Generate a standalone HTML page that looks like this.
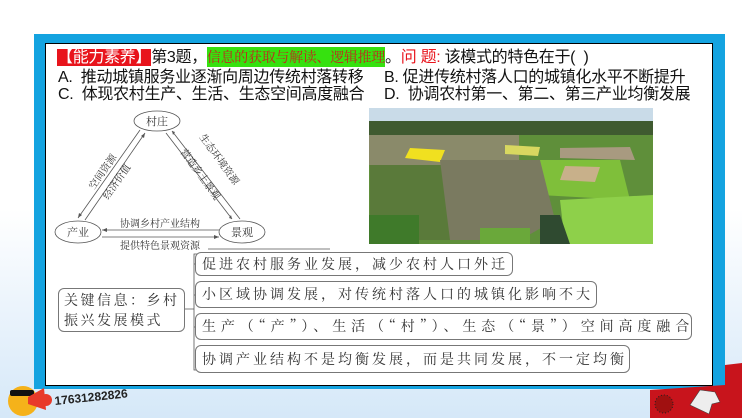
<!DOCTYPE html>
<html><head><meta charset="utf-8"><style>
*{margin:0;padding:0;box-sizing:border-box}
body{width:742px;height:418px;overflow:hidden;position:relative;background:linear-gradient(180deg,#fff 0%,#fff 50%,#e6f1fb 80%,#d5e8f8 100%);font-family:"Liberation Sans","Noto Sans CJK SC",sans-serif}
.ab{position:absolute}
.frame{left:34px;top:34px;width:691px;height:355px;background:#14a3e0}
.inner{left:45px;top:43px;width:668px;height:343px;background:#fff;border:1.5px solid #000}
.t{position:absolute;white-space:nowrap;font-size:16px;color:#111;font-family:"Liberation Sans","Noto Sans CJK SC",sans-serif;letter-spacing:-0.3px}
.box{position:absolute;border:1px solid #777;border-radius:6px;background:#fff;font-family:"Noto Serif CJK SC","Liberation Serif",serif;font-size:14px;color:#333;letter-spacing:3px;padding-left:6px;white-space:nowrap}
</style></head><body>
<div class="ab frame"></div>
<div class="ab inner"></div>
<div class="t" style="left:57px;top:47px;line-height:20px"><span style="background:#e8141c;color:#fff">【能力素养】</span>第3题，<span style="background:#36e10f;color:#c0281e;font-family:'Noto Serif CJK SC',serif;font-size:14px">信息的获取与解读、逻辑推理</span>。<span style="color:#e8141c">问 题:</span> 该模式的特色在于(&nbsp;&nbsp;)</div>
<div class="t" style="left:58px;top:69px;line-height:17px">A.&nbsp; 推动城镇服务业逐渐向周边传统村落转移</div>
<div class="t" style="left:384px;top:69px;line-height:17px">B. 促进传统村落人口的城镇化水平不断提升</div>
<div class="t" style="left:58px;top:86px;line-height:17px">C.&nbsp; 体现农村生产、生活、生态空间高度融合</div>
<div class="t" style="left:384px;top:86px;line-height:17px">D.&nbsp; 协调农村第一、第二、第三产业均衡发展</div>

<svg class="ab" style="left:0;top:0" width="742" height="418">
<g fill="none" stroke="#555" stroke-width="0.8">
<ellipse cx="157" cy="121" rx="23" ry="10"/>
<ellipse cx="78" cy="232" rx="23" ry="11"/>
<ellipse cx="242" cy="232" rx="23" ry="11"/>
<line x1="140" y1="130" x2="78" y2="218"/><line x1="85" y1="220" x2="145" y2="133"/>
<line x1="166" y1="133" x2="232" y2="219"/><line x1="240" y1="219" x2="172" y2="131"/>
<line x1="102" y1="230" x2="219" y2="230"/><line x1="102" y1="237" x2="219" y2="237"/>
<line x1="208" y1="249" x2="330" y2="249"/>
<path d="M199 254 H194 V370 H199 M194 264 H199 M194 295 H199 M194 327 H199 M185 309 H194"/>
</g>
<g fill="#555"><path d="M78 218 l1 -5 l3 2z"/><path d="M145 133 l-1 5 l-3 -2z"/><path d="M232 219 l-3 -1 l2 -3z"/><path d="M172 131 l3 1 l-2 3z"/><path d="M102 230 l5 -2 v4z"/><path d="M219 237 l-5 -2 v4z"/></g>
<g font-family="Noto Serif CJK SC,serif" font-size="11" fill="#333">
<text x="146" y="125">村庄</text><text x="67" y="236">产业</text><text x="231" y="236">景观</text>
<text x="120" y="227" font-size="10">协调乡村产业结构</text>
<text x="120" y="249" font-size="10">提供特色景观资源</text>
<text transform="translate(94,190) rotate(-55)" font-size="10">空间资源</text>
<text transform="translate(108,200) rotate(-55)" font-size="10">经济价值</text>
<text transform="translate(199,137) rotate(54)" font-size="10">生态环境资源</text>
<text transform="translate(180,152) rotate(54)" font-size="10">营造乡土景观</text>
</g>
<!-- photo -->
<g>
<rect x="369" y="108" width="284" height="136" fill="#5f8f3a"/>
<rect x="369" y="108" width="284" height="13" fill="#c9dbe8"/>
<rect x="369" y="121" width="284" height="14" fill="#3f5a30"/>
<rect x="369" y="135" width="150" height="30" fill="#8a8a6a"/>
<polygon points="410,148 445,150 440,162 405,158" fill="#f0e020"/>
<polygon points="505,145 540,147 538,156 505,154" fill="#d8d860"/>
<polygon points="560,148 630,147 635,160 560,158" fill="#a89a80"/>
<polygon points="540,160 620,160 630,200 540,195" fill="#7fbf3a"/>
<polygon points="565,166 600,167 595,182 560,180" fill="#c8b08a"/>
<polygon points="370,165 450,165 470,240 370,240" fill="#5a7a3a"/>
<polygon points="440,160 540,160 555,220 520,240 450,240" fill="#7a7a60"/>
<polygon points="560,200 653,195 653,244 565,244" fill="#8ed04a"/>
<polygon points="540,215 560,215 570,244 540,244" fill="#2f4a30"/>
<rect x="369" y="215" width="50" height="29" fill="#3f7a2a"/>
<rect x="480" y="228" width="50" height="16" fill="#6aa83a"/>
</g>
<!-- emoji -->
<circle cx="23" cy="401" r="15" fill="#f5b21a"/>
<rect x="10" y="390" width="24" height="6" rx="2" fill="#111"/>
<path d="M28 397 L44 388 L46 410 L28 404z" fill="#e83a2a"/>
<circle cx="46" cy="400" r="6" fill="#e83a2a"/>
<text x="55" y="405" font-size="12" font-weight="bold" fill="#222" font-family="Liberation Sans" transform="rotate(-6 55 405)">17631282826</text>
<!-- bottom right -->
<polygon points="650,390 725,385 742,383 742,418 650,418" fill="#c8141c"/>
<polygon points="725,365 742,363 742,390 725,392" fill="#c8141c"/>
<circle cx="664" cy="404" r="9" fill="#a01010" stroke="#222" stroke-dasharray="1 2"/>
<path d="M690 405 l10 -15 l15 2 l5 10 l-8 2 l-3 10z" fill="#eee" stroke="#444" stroke-width="0.6"/>
</svg>

<div class="box" style="left:195px;top:252px;width:318px;height:24px;line-height:22px">促进农村服务业发展，减少农村人口外迁</div>
<div class="box" style="left:195px;top:281px;width:402px;height:27px;line-height:25px">小区域协调发展，对传统村落人口的城镇化影响不大</div>
<div class="box" style="left:195px;top:313px;width:497px;height:27px;line-height:25px;letter-spacing:4.9px">生产（“产”）、生活（“村”）、生态（“景”）空间高度融合</div>
<div class="box" style="left:195px;top:345px;width:435px;height:28px;line-height:26px">协调产业结构不是均衡发展，而是共同发展，不一定均衡</div>
<div class="box" style="left:58px;top:288px;width:127px;height:44px;line-height:20px;white-space:normal;padding-top:1px;padding-left:5px;letter-spacing:2.5px">关键信息：乡村<br>振兴发展模式</div>
</body></html>
